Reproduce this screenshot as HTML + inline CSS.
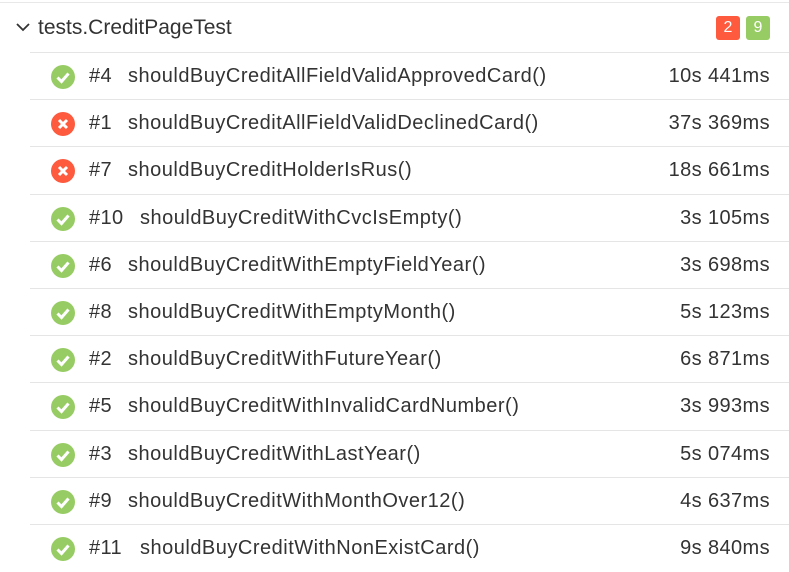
<!DOCTYPE html>
<html><head><style>
body{margin:0;width:789px;height:569px;background:#fff;font-family:"Liberation Sans",Arial,sans-serif;color:#333;overflow:hidden;position:relative}
.top{position:absolute;left:0;right:0;top:2px;border-top:1px solid #e8e8e8}
.hdr{position:absolute;left:38px;top:16px;font-size:21px}
.chev{position:absolute;left:15px;top:20px}
.badge{position:absolute;top:16px;width:24px;height:24px;border-radius:3px;color:#fff;font-size:16px;text-align:center;line-height:24px}
.row{position:absolute;left:30px;right:0;height:47px;border-top:1px solid #e5e5e5;font-size:20px;letter-spacing:0.4px}
.row .ic{position:absolute;left:21px;top:12px}
.row .n{position:absolute;left:59px;top:12px}
.row .t{position:absolute;left:98px;top:12px;letter-spacing:0.5px}
.row .d{position:absolute;right:19px;top:12px}
</style></head><body>
<div class="top"></div>
<svg class="chev" width="16" height="14" viewBox="0 0 16 14"><path d="M2 4l6 6 6-6" fill="none" stroke="#333" stroke-width="1.8"/></svg>
<div class="hdr">tests.CreditPageTest</div>
<div class="badge" style="left:716px;background:#fd5a3e">2</div>
<div class="badge" style="left:746px;background:#97cc64">9</div>
<div id="rows"></div>
<script>
var d=[["p","#4","shouldBuyCreditAllFieldValidApprovedCard()","10s 441ms"],
["f","#1","shouldBuyCreditAllFieldValidDeclinedCard()","37s 369ms"],
["f","#7","shouldBuyCreditHolderIsRus()","18s 661ms"],
["p","#10","shouldBuyCreditWithCvcIsEmpty()","3s 105ms"],
["p","#6","shouldBuyCreditWithEmptyFieldYear()","3s 698ms"],
["p","#8","shouldBuyCreditWithEmptyMonth()","5s 123ms"],
["p","#2","shouldBuyCreditWithFutureYear()","6s 871ms"],
["p","#5","shouldBuyCreditWithInvalidCardNumber()","3s 993ms"],
["p","#3","shouldBuyCreditWithLastYear()","5s 074ms"],
["p","#9","shouldBuyCreditWithMonthOver12()","4s 637ms"],
["p","#11","shouldBuyCreditWithNonExistCard()","9s 840ms"]];
var h="";
d.forEach(function(r,i){
var top=52+i*47.2;
var ic=r[0]=="p"?'<svg class="ic" width="24" height="24"><circle cx="12" cy="12" r="12" fill="#97cc64"/><path d="M6.5 12.5l4 4 7-8" fill="none" stroke="#fff" stroke-width="3"/></svg>':'<svg class="ic" width="24" height="24"><circle cx="12" cy="12" r="12" fill="#fd5a3e"/><path d="M8 8l8 8M16 8l-8 8" stroke="#fff" stroke-width="3"/></svg>';
var tl=r[1].length>2?110:98;
h+='<div class="row" style="top:'+top+'px">'+ic+'<span class="n">'+r[1]+'</span><span class="t" style="left:'+tl+'px">'+r[2]+'</span><span class="d">'+r[3]+'</span></div>';
});
document.getElementById("rows").innerHTML=h;
</script>
</body></html>
